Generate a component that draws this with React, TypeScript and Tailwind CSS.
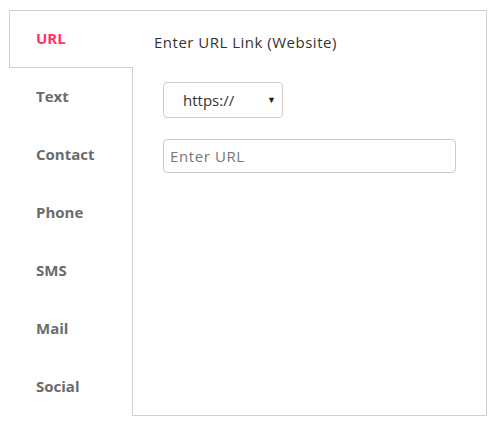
import React, { useState } from 'react';

const tabs = ['URL', 'Text', 'Contact', 'Phone', 'SMS', 'Mail', 'Social'];

export default function App() {
  const [active] = useState('URL');
  const rest = tabs.filter((t) => t !== active);

  return (
    <div className="w-[495px] h-[423px] bg-white pt-[10px] pl-[9px] font-['Open_Sans',sans-serif]">
      <div className="flex w-[478px] h-[406px]">
        {/* Tab list */}
        <div className="w-[124px] flex flex-col">
          <div className="h-[58px] border-t border-l border-b border-[#d0d0d0] pl-[26px] pb-[2px] flex items-center text-[15px] font-bold text-[#ff3366]">
            {active}
          </div>
          <div className="flex-1 border-r border-[#d0d0d0] flex flex-col">
            {rest.map((t) => (
              <div
                key={t}
                className="h-[58px] pl-[27px] pb-[2px] flex items-center text-[15px] font-bold text-[#6b6b6b]"
              >
                {t}
              </div>
            ))}
          </div>
        </div>

        {/* Panel */}
        <div className="flex-1 border-t border-r border-b border-[#d0d0d0] pl-[21px] pt-[21px]">
          <p className="text-[15px] tracking-[0.5px] text-[#333] leading-5">Enter URL Link (Website)</p>
          <div className="mt-[30px] ml-[9px] w-[120px] h-[36px] border border-[#ccc] rounded-[4px] flex items-center justify-between pl-[19px] pr-[6px]">
            <span className="text-[15px] text-[#333]">https://</span>
            <span className="text-[9px] text-[#222]">▼</span>
          </div>
          <div className="mt-[21px] ml-[9px] w-[293px] h-[34px] border border-[#ccc] rounded-[4px] flex items-center pl-[6px]">
            <input
              className="w-full outline-none text-[15px] tracking-[0.6px] text-[#333] placeholder:text-[#777] bg-transparent"
              placeholder="Enter URL"
            />
          </div>
        </div>
      </div>
    </div>
  );
}
